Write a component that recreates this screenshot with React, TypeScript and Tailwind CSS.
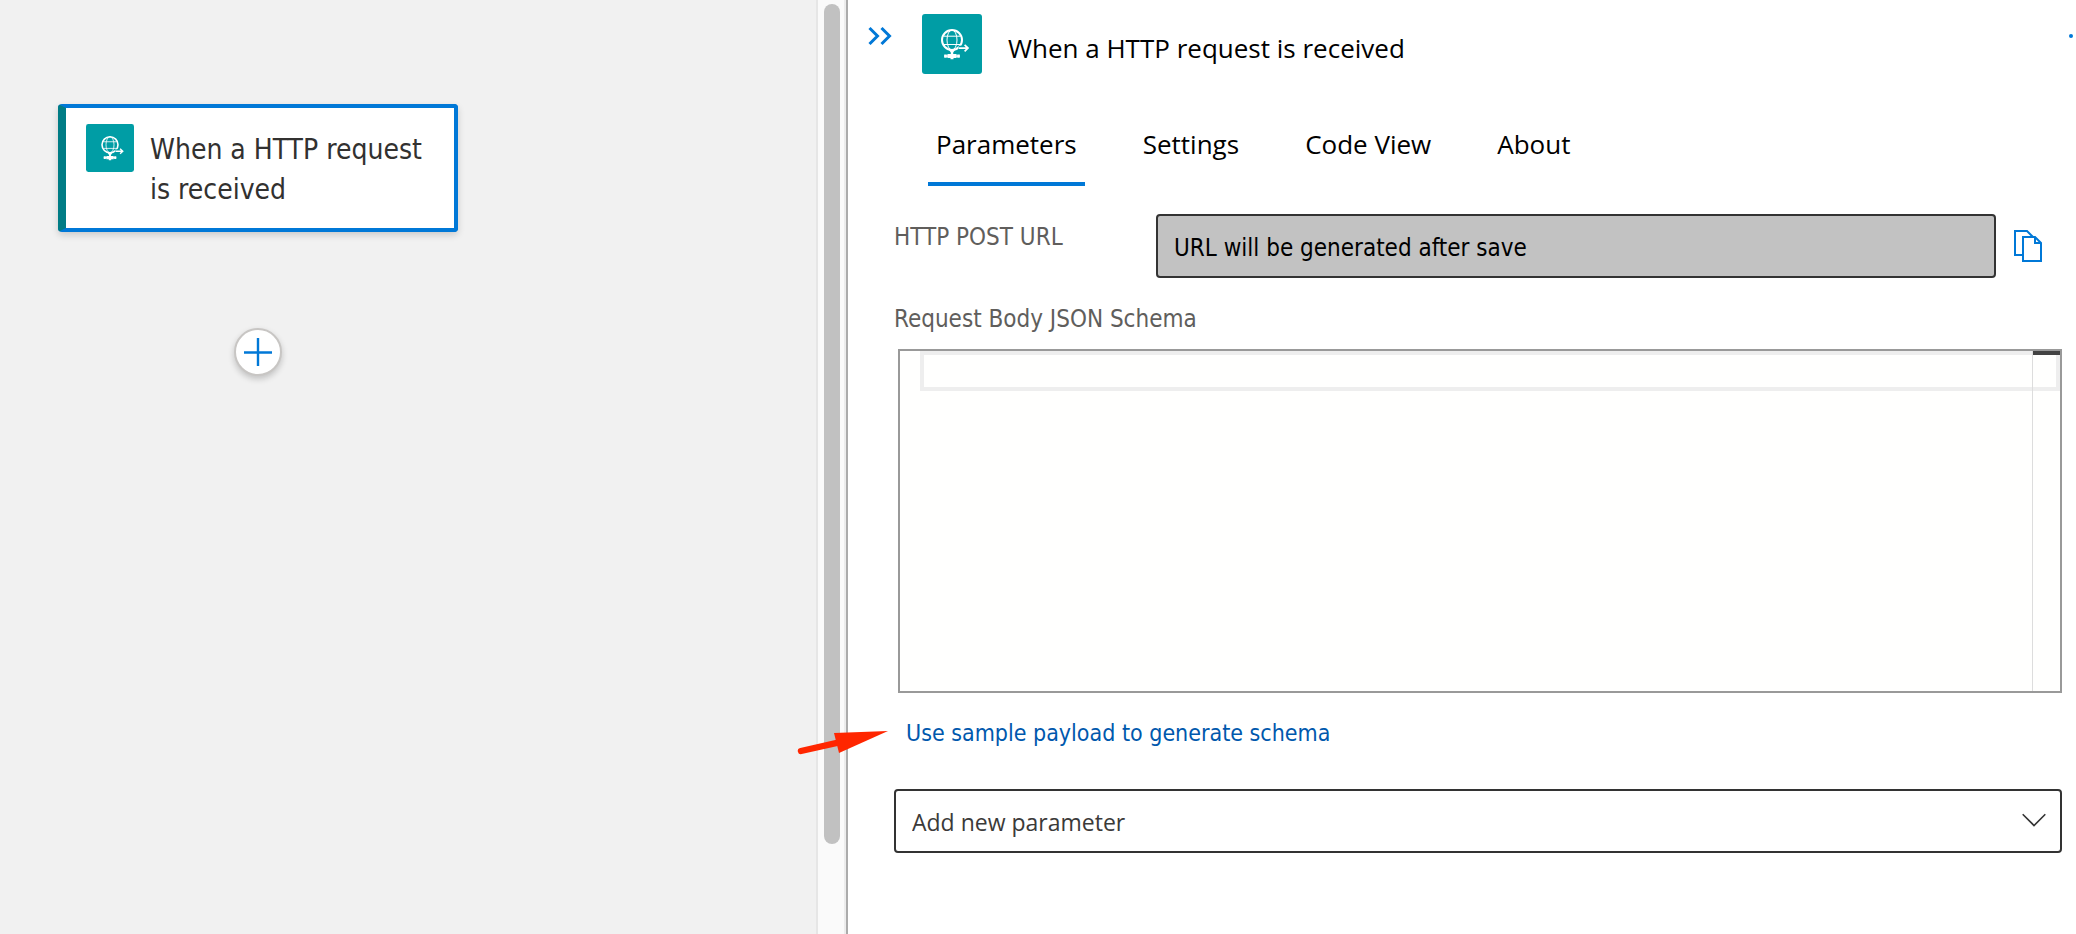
import React, { useState } from 'react';

const TABS = ['Parameters', 'Settings', 'Code View', 'About'];

function HttpIcon({ className }: { className: string }) {
  return (
    <svg viewBox="0 0 60 60" className={className} fill="none" stroke="#fff" aria-hidden="true">
      <rect width="60" height="60" rx="3" fill="#009da5" stroke="none" />
      <circle cx="30" cy="26" r="10" strokeWidth="2" />
      <ellipse cx="30" cy="26" rx="5" ry="10" strokeWidth="1" />
      <path d="M21.5 22.2h17M21.5 30.5h17" strokeWidth="1" />
      <path d="M26.6 35.6h6.8L31.2 38.6v2.2h-2.4v-2.2z" fill="#fff" stroke="none" />
      <path d="M22.2 40.4h2.6v3.4h-2.6zM25.4 40h9.2v4h-3.1v1.3h-3V44h-3.1zM35.2 40.4h2.6v3.4h-2.6z" fill="#fff" stroke="none" />
      <path d="M22.2 42.1h15.6" strokeWidth="1.4" />
      <path d="M36.6 34h5" stroke="#009da5" strokeWidth="4.6" />
      <path d="M36.9 34.1h9.1M42.6 30.9l3.4 3.2-3.4 3.2" strokeWidth="1.7" />
    </svg>
  );
}

function Canvas() {
  return (
    <section aria-label="Workflow canvas" className="flex w-[848px] shrink-0">
      <div className="flex-1 bg-[#f1f1f1] pt-[104px] pl-[58px]">
        <div className="flex w-[400px] flex-col items-center gap-24">
          <button
            type="button"
            className="flex h-32 w-full items-start gap-4 rounded-sm border-4 border-l-8 border-[#0078d7] border-l-[#007c85] bg-white py-4 pl-5 text-left text-[28px] leading-10 text-[#323130] shadow-[0_3px_7px_rgba(0,0,0,0.16)]"
          >
            <HttpIcon className="size-12 shrink-0" />
            <span className="w-[284px] pt-1.5">When a HTTP request is received</span>
          </button>
          <button
            type="button"
            aria-label="Add step"
            className="flex size-12 items-center justify-center rounded-full border-2 border-[#c8c6c4] bg-white shadow-[0_3px_6px_rgba(0,0,0,0.2)]"
          >
            <svg viewBox="0 0 28 28" className="size-7" stroke="#0078d7" strokeWidth="2.4" aria-hidden="true">
              <path d="M14 0v28M0 14.5h28" />
            </svg>
          </button>
        </div>
      </div>
      <div className="w-7 border-l-2 border-[#e6e6e6] bg-[#fafafa] pt-1 pl-1.5">
        <div className="h-[840px] w-4 rounded-full bg-[#c1c1c1]" />
      </div>
      <div className="w-1 border-r-2 border-[#ababab] bg-[#ececec]" />
    </section>
  );
}

export default function App() {
  const [tab, setTab] = useState('Parameters');
  return (
    <div className="relative flex min-h-screen overflow-hidden bg-white font-['DejaVu_Sans_Condensed','Noto_Sans',sans-serif]">
      <Canvas />
      <main className="min-w-0 flex-1 pr-3.5 pl-[46px] text-[24px] leading-8">
        <header className="-mr-3.5 -ml-[26px] flex h-[88px] items-start pt-3.5 font-['Open_Sans',sans-serif]">
          <button type="button" aria-label="Collapse panel" className="mt-3 mr-[30px] h-5 w-6">
            <svg viewBox="0 0 24 20" className="h-5 w-6" fill="none" stroke="#0078d7" strokeWidth="3" aria-hidden="true">
              <path d="M1.5 2l8 8-8 8M13.5 2l8 8-8 8" />
            </svg>
          </button>
          <HttpIcon className="size-[60px] shrink-0" />
          <h1 className="ml-[26px] flex-1 pt-4 text-[26px] leading-9 text-black">When a HTTP request is received</h1>
          <button type="button" aria-label="More commands" className="mt-5 mr-[3px] size-1 rounded-full bg-[#0078d7]" />
        </header>
        <nav className="flex gap-[50px] pt-8 pl-[34px] font-['Open_Sans',sans-serif]" role="tablist">
          {TABS.map((t) => (
            <button
              key={t}
              type="button"
              role="tab"
              aria-selected={t === tab}
              onClick={() => setTab(t)}
              className={
                t === tab
                  ? 'h-[66px] border-b-4 border-[#0078d7] px-2 pb-3.5 text-[26px] leading-9 text-black'
                  : 'h-[66px] border-b-4 border-transparent px-2 pb-3.5 text-[26px] leading-9 text-black'
              }
            >
              {t}
            </button>
          ))}
        </nav>

        <div className="mt-7 flex items-start pr-5">
          <label htmlFor="post-url" className="w-[262px] shrink-0 pt-[7px] text-[#605e5c]">HTTP POST URL</label>
          <input
            id="post-url"
            readOnly
            value="URL will be generated after save"
            className="h-16 min-w-0 flex-1 rounded-sm border-2 border-[#333] bg-[#c2c2c2] px-4 pt-1 text-black"
          />
          <button type="button" aria-label="Copy URL" className="mt-4 ml-[18px]">
            <svg viewBox="0 0 28 32" className="h-8 w-7" fill="none" stroke="#0078d7" strokeWidth="2" aria-hidden="true">
              <path d="M8 25H1V1h12l6 6" />
              <path d="M9 7h12l6 6v18H9zM21 7v6h6" />
            </svg>
          </button>
        </div>

        <label htmlFor="schema" className="mt-[25px] block text-[#605e5c]">Request Body JSON Schema</label>
        <div className="relative mt-3.5 ml-1 h-[344px] border-2 border-[#999] bg-[#fffffe]">
          <textarea id="schema" className="block size-full resize-none px-7 py-1 outline-none" />
          <div className="pointer-events-none absolute inset-x-0 top-0 ml-5 h-10 border-4 border-[#eee]" />
          <div className="pointer-events-none absolute inset-y-0 right-0 w-7 border-l border-[#ddd]">
            <div className="h-1 bg-[#424242]" />
          </div>
        </div>

        <a href="#sample" className="mt-6 ml-3 block w-fit text-[23px] text-[#0058ad]">Use sample payload to generate schema</a>

        <div className="relative mt-10">
          <select
            aria-label="Add new parameter"
            defaultValue=""
            className="block h-16 w-full appearance-none rounded border-2 border-[#333] bg-white px-4 pt-0.5 font-['Open_Sans',sans-serif] text-[23px] text-[#3b3a39]"
          >
            <option value="">Add new parameter</option>
          </select>
          <svg viewBox="0 0 24 14" className="pointer-events-none absolute top-6 right-4 h-3.5 w-6" fill="none" stroke="#333" strokeWidth="1.6" aria-hidden="true">
            <path d="M.7 1.2L12 12.5 23.3 1.2" />
          </svg>
        </div>
      </main>

      <svg viewBox="0 0 92 28" className="pointer-events-none absolute top-[729px] left-[797px] h-7 w-[92px]" aria-hidden="true">
        <path d="M4 22L40 13.8" stroke="#ff2600" strokeWidth="6.4" strokeLinecap="round" />
        <path d="M37 4L91 2 42 24z" fill="#ff2600" />
      </svg>
    </div>
  );
}
